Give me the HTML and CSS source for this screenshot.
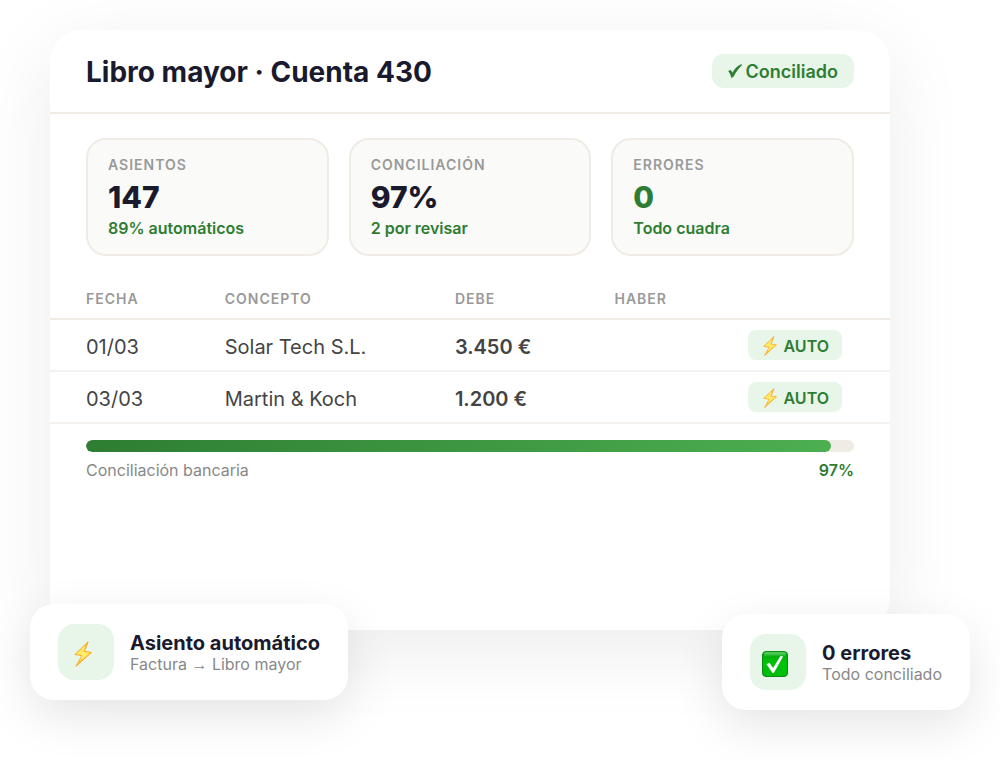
FILE: index.html
```html
<!DOCTYPE html>
<html lang="es">
<head>
    <meta charset="UTF-8">
    <meta name="viewport" content="width=device-width, initial-scale=1.0">
    <title>Libro mayor</title>
    <link rel="stylesheet" href="styles.css">
</head>
<body>

    <!-- Iconos compartidos -->
    <svg class="sprite" aria-hidden="true">
        <defs>
            <linearGradient id="boltFill" x1="0" y1="0" x2="0" y2="1">
                <stop offset="0" stop-color="#ffb62e"/>
                <stop offset="0.5" stop-color="#ffe04a"/>
                <stop offset="1" stop-color="#ffb62e"/>
            </linearGradient>
            <linearGradient id="checkFill" x1="0" y1="0" x2="0" y2="1">
                <stop offset="0" stop-color="#00a510"/>
                <stop offset="0.5" stop-color="#00c408"/>
                <stop offset="1" stop-color="#00ba0c"/>
            </linearGradient>
            <linearGradient id="checkShine" x1="0" y1="0" x2="0" y2="1">
                <stop offset="0" stop-color="#6fd670"/>
                <stop offset="1" stop-color="#14b01e"/>
            </linearGradient>
        </defs>
        <symbol id="bolt" viewBox="0 0 18 26">
            <path d="M14.200 .7 .9 13.500l7 1.100L2 25.300 17.500 11.500l-7-1.200z" fill="url(#boltFill)" stroke="#fba51c" stroke-width=".9" stroke-linejoin="round"/>
            <path d="M10.500 5.500 4.200 12.500l5.400.9-2.700 4.700 6.800-5.800-5.200-.9z" fill="#ffe94a" stroke="#fff8c0" stroke-width=".6"/>
        </symbol>
    </svg>

    <main class="stage">
        <section class="card">
            <header class="card-header">
                <h1>Libro mayor · Cuenta 430</h1>
                <span class="status">
                    <svg class="tick" viewBox="0 0 14 14" aria-hidden="true"><path d="M.4 7.200C1.500 5.800 2.800 5.900 3.600 7.200l.8 1.800C6.500 5 9 2 13.700.3l.2.600C10.300 4.500 7.800 8 5.200 12.900l-1.700.8C2.800 11.200 1.900 8.800.4 7.200z" fill="currentColor" stroke="currentColor" stroke-width=".3"/></svg>
                    Conciliado
                </span>
            </header>

            <div class="stats">
                <div class="stat">
                    <div class="stat-label">ASIENTOS</div>
                    <div class="stat-value">147</div>
                    <div class="stat-note">89% automáticos</div>
                </div>
                <div class="stat">
                    <div class="stat-label">CONCILIACIÓN</div>
                    <div class="stat-value">97%</div>
                    <div class="stat-note">2 por revisar</div>
                </div>
                <div class="stat">
                    <div class="stat-label">ERRORES</div>
                    <div class="stat-value green">0</div>
                    <div class="stat-note">Todo cuadra</div>
                </div>
            </div>

            <table class="ledger">
                <colgroup>
                    <col class="col-date">
                    <col class="col-concept">
                    <col class="col-debit">
                    <col class="col-credit">
                    <col>
                </colgroup>
                <thead>
                    <tr>
                        <th>FECHA</th>
                        <th>CONCEPTO</th>
                        <th>DEBE</th>
                        <th>HABER</th>
                        <th></th>
                    </tr>
                </thead>
                <tbody>
                    <tr>
                        <td>01/03</td>
                        <td>Solar Tech S.L.</td>
                        <td class="amount">3.450 €</td>
                        <td></td>
                        <td><span class="auto"><svg class="auto-icon" aria-hidden="true"><use href="#bolt"/></svg>AUTO</span></td>
                    </tr>
                    <tr>
                        <td>03/03</td>
                        <td>Martin &amp; Koch</td>
                        <td class="amount">1.200 €</td>
                        <td></td>
                        <td><span class="auto"><svg class="auto-icon" aria-hidden="true"><use href="#bolt"/></svg>AUTO</span></td>
                    </tr>
                </tbody>
            </table>

            <div class="progress">
                <div class="progress-track">
                    <div class="progress-fill" style="width: 97%"></div>
                </div>
                <div class="progress-info">
                    <span>Conciliación bancaria</span>
                    <strong>97%</strong>
                </div>
            </div>

            <!-- Avisos flotantes sobre la tarjeta -->
            <div class="float float-left">
                <div class="float-icon">
                    <svg class="bolt-icon" aria-hidden="true"><use href="#bolt"/></svg>
                </div>
                <div class="float-body">
                    <div class="float-title">Asiento automático</div>
                    <div class="float-text">Factura <span class="arrow">→</span> Libro mayor</div>
                </div>
            </div>
            <div class="float float-right">
                <div class="float-icon">
                    <svg class="check-icon" viewBox="0 0 26 26" aria-hidden="true">
                        <rect x=".5" y=".5" width="25" height="25" rx="3.500" fill="url(#checkFill)" stroke="#078c18"/>
                        <rect x="2" y="1.200" width="22" height="4" rx="2" fill="url(#checkShine)"/>
                        <path d="M4.500 13.200l2.900-1.500 3.700 5.300L18.300 5.200h2.900L11.800 22h-1.300z" fill="#fff"/>
                    </svg>
                </div>
                <div class="float-body">
                    <div class="float-title">0 errores</div>
                    <div class="float-text">Todo conciliado</div>
                </div>
            </div>
        </section>
    </main>

</body>
</html>
```

FILE: styles.css
```css
* {
    box-sizing: border-box;
}
body {
    margin: 0;
    font-family: Inter, "Liberation Sans", sans-serif;
    background-color: #fff;
    color: #1a1a2e;
}
.sprite {
    position: absolute;
    width: 0;
    height: 0;
}
.stage {
    display: flex;
    min-height: 100vh;
    padding: 30px 110px 130px 50px;
    overflow: hidden;
}
.card {
    position: relative;
    flex: 1;
    background-color: #fff;
    border-radius: 32px;
    box-shadow: 0 20px 80px rgba(0, 0, 0, 0.08);
}
.card-header {
    display: flex;
    justify-content: space-between;
    align-items: center;
    padding: 24px 36px;
    border-bottom: 2px solid #f0ebe4;
}
h1 {
    margin: 0;
    padding-top: 2px;
    font-size: 28px;
    line-height: 32px;
    font-weight: 700;
}
.status {
    display: flex;
    align-items: center;
    gap: 4px;
    height: 34px;
    padding: 0 16px;
    border-radius: 12px;
    background-color: #e8f5e9;
    color: #2e7d32;
    font-size: 18px;
    font-weight: 600;
}
.tick {
    width: 14px;
    height: 14px;
}
.stats {
    display: grid;
    grid-template-columns: repeat(3, 1fr);
    gap: 20px;
    padding: 24px 36px;
}
.stat {
    padding: 16px 20px;
    border: 2px solid #f0ebe4;
    border-radius: 20px;
    background-color: #fafaf8;
}
.stat-label {
    font-size: 14px;
    line-height: 18px;
    font-weight: 600;
    letter-spacing: 1px;
    color: #999;
}
.stat-value {
    padding-top: 2px;
    font-size: 30px;
    line-height: 42px;
    font-weight: 800;
}
.stat-note {
    font-size: 16px;
    line-height: 20px;
    font-weight: 600;
    color: #2e7d32;
}
.green {
    color: #2e7d32;
}
.ledger {
    width: 100%;
    table-layout: fixed;
    border-collapse: separate;
    border-spacing: 0;
}
.col-date {
    width: 20.8%;
}
.col-concept {
    width: 27.4%;
}
.col-debit {
    width: 19%;
}
.col-credit {
    width: 12%;
}
.ledger th {
    height: 40px;
    padding: 0 0 2px;
    border-bottom: 2px solid #f0ebe4;
    text-align: left;
    font-size: 14px;
    font-weight: 600;
    letter-spacing: 1px;
    color: #999;
}
.ledger td {
    height: 52px;
    padding: 4px 0 0;
    border-bottom: 2px solid #f5f1ee;
    font-size: 20px;
    color: #444;
}
.ledger th:first-child, .ledger td:first-child {
    padding-left: 36px;
}
.ledger td:last-child {
    padding-top: 0;
    padding-right: 48px;
    text-align: right;
}
.ledger .amount {
    font-weight: 600;
}
.auto {
    display: inline-flex;
    align-items: center;
    gap: 6px;
    height: 30px;
    padding: 2px 13px 0 14px;
    border-radius: 8px;
    background-color: #e8f5e9;
    color: #2e7d32;
    font-size: 16px;
    font-weight: 600;
    vertical-align: middle;
}
.auto-icon {
    width: 16px;
    height: 20px;
}
.progress {
    padding: 16px 36px;
}
.progress-track {
    height: 12px;
    border-radius: 6px;
    background-color: #f0ebe4;
    overflow: hidden;
}
.progress-fill {
    height: 100%;
    border-radius: 6px;
    background: linear-gradient(90deg, #2e7d32, #4caf50);
}
.progress-info {
    display: flex;
    justify-content: space-between;
    margin-top: 8px;
    font-size: 16px;
    line-height: 20px;
    color: #888;
}
.progress-info strong {
    font-weight: 600;
    color: #2e7d32;
}
.float {
    position: absolute;
    display: flex;
    align-items: center;
    gap: 16px;
    padding: 20px 28px;
    border-radius: 24px;
    background-color: #fff;
    box-shadow: 0 16px 48px rgba(0, 0, 0, 0.1);
    white-space: nowrap;
}
.float-left {
    left: -20px;
    bottom: -70px;
}
.float-right {
    right: -80px;
    bottom: -80px;
}
.float-icon {
    display: flex;
    justify-content: center;
    align-items: center;
    width: 56px;
    height: 56px;
    padding: 4px 6px 0 0;
    border-radius: 16px;
    background-color: #e8f5e9;
}
.bolt-icon {
    width: 18px;
    height: 26px;
}
.check-icon {
    width: 26px;
    height: 26px;
}
.float-body {
    padding-top: 2px;
}
.float-title {
    font-size: 20px;
    line-height: 22px;
    font-weight: 700;
}
.float-text {
    font-size: 16px;
    line-height: 20px;
    color: #888;
}
.arrow {
    font-family: "Liberation Sans", sans-serif;
    font-size: 16px;
}
```
